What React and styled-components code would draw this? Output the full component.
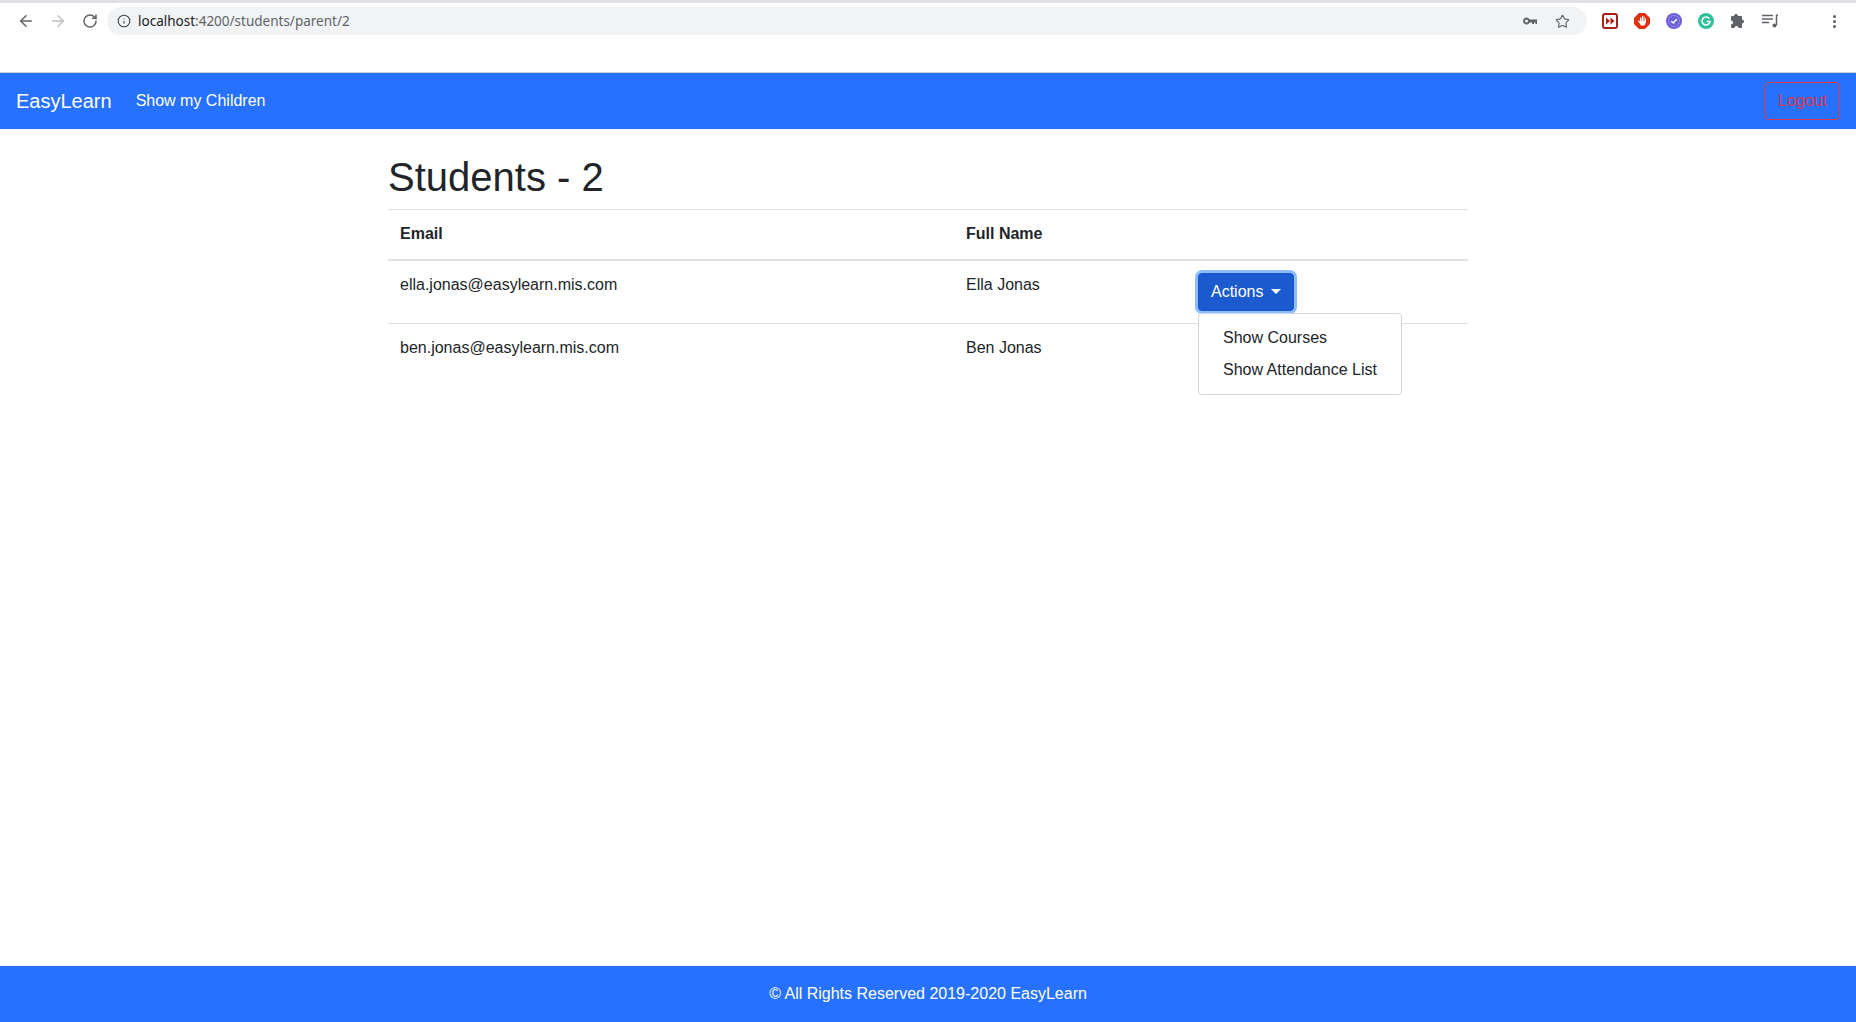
import styled, { createGlobalStyle } from 'styled-components';
import { ArrowLeft, ArrowRight, RotateCw, Info, Star, MoreVertical } from 'lucide-react';

const GlobalStyle = createGlobalStyle`
  html, body {
    margin: 0;
    padding: 0;
    height: 100%;
    background: #fff;
    font-family: "Liberation Sans", Arial, sans-serif;
    color: #212529;
  }
  #root {
    height: 100%;
  }
  * {
    box-sizing: border-box;
  }
`;

const Page = styled.div`
  display: flex;
  flex-direction: column;
  height: 1022px;
  overflow: hidden;
`;

const TabStrip = styled.div`
  height: 3px;
  background: #dee1e6;
  flex: none;
`;

const Toolbar = styled.div`
  height: 70px;
  flex: none;
  background: #fff;
  border-bottom: 1px solid #d0d2d6;
  display: flex;
  align-items: flex-start;
  padding: 4px 0 0 10px;
`;

const ToolIcon = styled.div`
  width: 32px;
  height: 28px;
  flex: none;
  display: flex;
  align-items: center;
  justify-content: center;
  color: ${(p) => p.$color || '#5f6368'};
`;

const Omnibox = styled.div`
  width: 1480px;
  height: 28px;
  margin-left: 1px;
  border-radius: 14px;
  background: #f1f3f4;
  display: flex;
  align-items: center;
  padding: 0 9px 0 10px;
  font-family: "Noto Sans", sans-serif;
  font-size: 13.5px;
  color: #5f6368;
`;

const Host = styled.span`
  color: #202124;
`;

const Url = styled.span`
  margin-left: 7px;
  flex: 1;
`;

const Extensions = styled.div`
  display: flex;
  align-items: center;
  margin-left: 7px;
`;

const Ext = styled.div`
  width: 32px;
  height: 28px;
  flex: none;
  display: flex;
  align-items: center;
  justify-content: center;
`;

const Navbar = styled.nav`
  height: 56px;
  flex: none;
  background: #2671ff;
  display: flex;
  align-items: center;
  padding: 0 16px;
`;

const Brand = styled.a`
  font-size: 20px;
  color: #fff;
  margin-right: 24px;
`;

const NavLink = styled.a`
  font-size: 16px;
  color: #fff;
  flex: 1;
`;

const LogoutButton = styled.button`
  height: 38px;
  padding: 0 12px;
  background: transparent;
  border: 1px solid #dc3545;
  border-radius: 4px;
  color: #dc3545;
  font: 16px "Liberation Sans", Arial, sans-serif;
`;

const Main = styled.main`
  flex: 1;
  width: 1080px;
  margin: 0 auto;
  padding-top: 24px;
`;

const Title = styled.h1`
  margin: 0 0 8px;
  font-size: 40px;
  font-weight: 400;
  line-height: 48px;
`;

const Table = styled.table`
  width: 100%;
  border-collapse: collapse;
  table-layout: fixed;
  font-size: 16px;
  line-height: 24px;
`;

const Th = styled.th`
  text-align: left;
  font-weight: 700;
  padding: 12px;
  height: 50px;
  border-top: 1px solid #dee2e6;
  border-bottom: 2px solid #dee2e6;
  width: ${(p) => p.$width};
`;

const Td = styled.td`
  padding: 12px;
  vertical-align: top;
  border-bottom: ${(p) => (p.$last ? 'none' : '1px solid #dee2e6')};
  height: ${(p) => (p.$last ? 'auto' : '63px')};
`;

const ActionsCell = styled.div`
  position: relative;
  margin-left: 0;
`;

const ActionsButton = styled.button`
  display: inline-flex;
  align-items: center;
  height: 38px;
  padding: 0 12px;
  background: #1c5ad0;
  border: 1px solid #1a55c6;
  border-radius: 4px;
  color: #fff;
  font: 16px "Liberation Sans", Arial, sans-serif;
  box-shadow: 0 0 0 3px #8fbcff;
  &::after {
    content: '';
    margin-left: 8px;
    border-top: 5px solid #fff;
    border-left: 5px solid transparent;
    border-right: 5px solid transparent;
  }
`;

const HiddenEdge = styled.div`
  width: 1px;
  height: 34px;
  background: #2671ff;
`;

const Menu = styled.div`
  position: absolute;
  top: 40px;
  left: 0;
  width: 204px;
  height: 82px;
  padding: 8px 0;
  background: #fff;
  border: 1px solid #d5d7da;
  border-radius: 4px;
  z-index: 2;
`;

const MenuItem = styled.div`
  padding: 4px 24px;
  line-height: 24px;
  white-space: nowrap;
`;

const Footer = styled.footer`
  height: 56px;
  flex: none;
  background: #2671ff;
  color: #fff;
  font-size: 16px;
  display: flex;
  align-items: center;
  justify-content: center;
`;

const KeyIcon = () => (
  <svg width="16" height="16" viewBox="0 0 16 16" fill="#5f6368">
    <path d="M4.5 4.5a3.5 3.5 0 1 0 3.2 5H10v1.500h2V9.500h1.500V11H15V6.500H7.700a3.500 3.500 0 0 0-3.200-2zm0 2a1.500 1.500 0 1 1 0 3 1.500 1.500 0 0 1 0-3z" />
  </svg>
);

const ForwardBadge = () => (
  <svg width="16" height="16" viewBox="0 0 16 16">
    <rect x="1" y="1" width="14" height="14" rx="2" fill="#fff" stroke="#a8201a" strokeWidth="2" />
    <path d="M4 4.500 8 8l-4 3.500zM8.500 4.500l4 3.500-4 3.500z" fill="#a8201a" />
  </svg>
);

const StopHand = () => (
  <svg width="16" height="16" viewBox="0 0 16 16">
    <path d="M5 0h6l5 5v6l-5 5H5l-5-5V5z" fill="#e0300f" />
    <path d="M6 4.500v4L4.500 7 4 8l3 4.500h3.500L12 9V5.500h-1V8h-.500V3.500h-1V8H9V3H8v5h-.500V4.500z" fill="#fff" />
  </svg>
);

const CheckBadge = () => (
  <svg width="16" height="16" viewBox="0 0 16 16">
    <circle cx="8" cy="8" r="8" fill="#6a5fd8" />
    <circle cx="8" cy="8" r="5.500" fill="none" stroke="#c5c0f2" strokeWidth="1" strokeDasharray="1 1" />
    <path d="M5.200 8.200 7.200 10l3.600-3.800" fill="none" stroke="#fff" strokeWidth="1.500" />
  </svg>
);

const GrammarlyBadge = () => (
  <svg width="16" height="16" viewBox="0 0 16 16">
    <circle cx="8" cy="8" r="8" fill="#2fc29a" />
    <path d="M11.300 5.700A4 4 0 1 0 12 8.500H8.800" fill="none" stroke="#fff" strokeWidth="1.500" />
  </svg>
);

const PuzzleIcon = () => (
  <svg width="16" height="16" viewBox="0 0 16 16" fill="#5f6368">
    <path d="M6 1a2 2 0 0 1 2 2h3a1 1 0 0 1 1 1v2.500a2 2 0 1 1 0 4V14a1 1 0 0 1-1 1H8.500a2 2 0 1 0-4 0H2a1 1 0 0 1-1-1v-2.500a2 2 0 1 0 0-4V4a1 1 0 0 1 1-1h2a2 2 0 0 1 2-2z" />
  </svg>
);

const QueueIcon = () => (
  <svg width="16" height="16" viewBox="0 0 16 16" fill="none" stroke="#5f6368" strokeWidth="1.300">
    <path d="M0 2.500h11M0 6h11M0 9.500h7" />
    <path d="M14.500 2v10" strokeWidth="1.500" />
    <path d="M14.500 2H16" strokeWidth="1.500" />
    <circle cx="12.500" cy="12.500" r="2" fill="#5f6368" stroke="none" />
  </svg>
);

const App = () => {
  return (
    <Page>
      <GlobalStyle />
      <TabStrip />
      <Toolbar>
        <ToolIcon><ArrowLeft size={18} strokeWidth={2} /></ToolIcon>
        <ToolIcon $color="#bcbec1"><ArrowRight size={18} strokeWidth={2} /></ToolIcon>
        <ToolIcon><RotateCw size={16} strokeWidth={2.200} /></ToolIcon>
        <Omnibox>
          <Info size={14} strokeWidth={1.800} color="#3c4043" />
          <Url><Host>localhost</Host>:4200/students/parent/2</Url>
          <ToolIcon><KeyIcon /></ToolIcon>
          <ToolIcon><Star size={15} strokeWidth={1.800} /></ToolIcon>
        </Omnibox>
        <Extensions>
          <Ext><ForwardBadge /></Ext>
          <Ext><StopHand /></Ext>
          <Ext><CheckBadge /></Ext>
          <Ext><GrammarlyBadge /></Ext>
          <Ext><PuzzleIcon /></Ext>
          <Ext><QueueIcon /></Ext>
          <Ext />
          <Ext><MoreVertical size={17} color="#5f6368" strokeWidth={2.400} /></Ext>
        </Extensions>
      </Toolbar>
      <Navbar>
        <Brand>EasyLearn</Brand>
        <NavLink>Show my Children</NavLink>
        <LogoutButton>Logout</LogoutButton>
      </Navbar>
      <Main>
        <Title>Students - 2</Title>
        <Table>
          <thead>
            <tr>
              <Th $width="566px">Email</Th>
              <Th $width="232px">Full Name</Th>
              <Th />
            </tr>
          </thead>
          <tbody>
            <tr>
              <Td>ella.jonas@easylearn.mis.com</Td>
              <Td>Ella Jonas</Td>
              <Td>
                <ActionsCell>
                  <ActionsButton>Actions</ActionsButton>
                  <Menu>
                    <MenuItem>Show Courses</MenuItem>
                    <MenuItem>Show Attendance List</MenuItem>
                  </Menu>
                </ActionsCell>
              </Td>
            </tr>
            <tr>
              <Td $last>ben.jonas@easylearn.mis.com</Td>
              <Td $last>Ben Jonas</Td>
              <Td $last><HiddenEdge /></Td>
            </tr>
          </tbody>
        </Table>
      </Main>
      <Footer>© All Rights Reserved 2019-2020 EasyLearn</Footer>
    </Page>
  );
};

export default App;
